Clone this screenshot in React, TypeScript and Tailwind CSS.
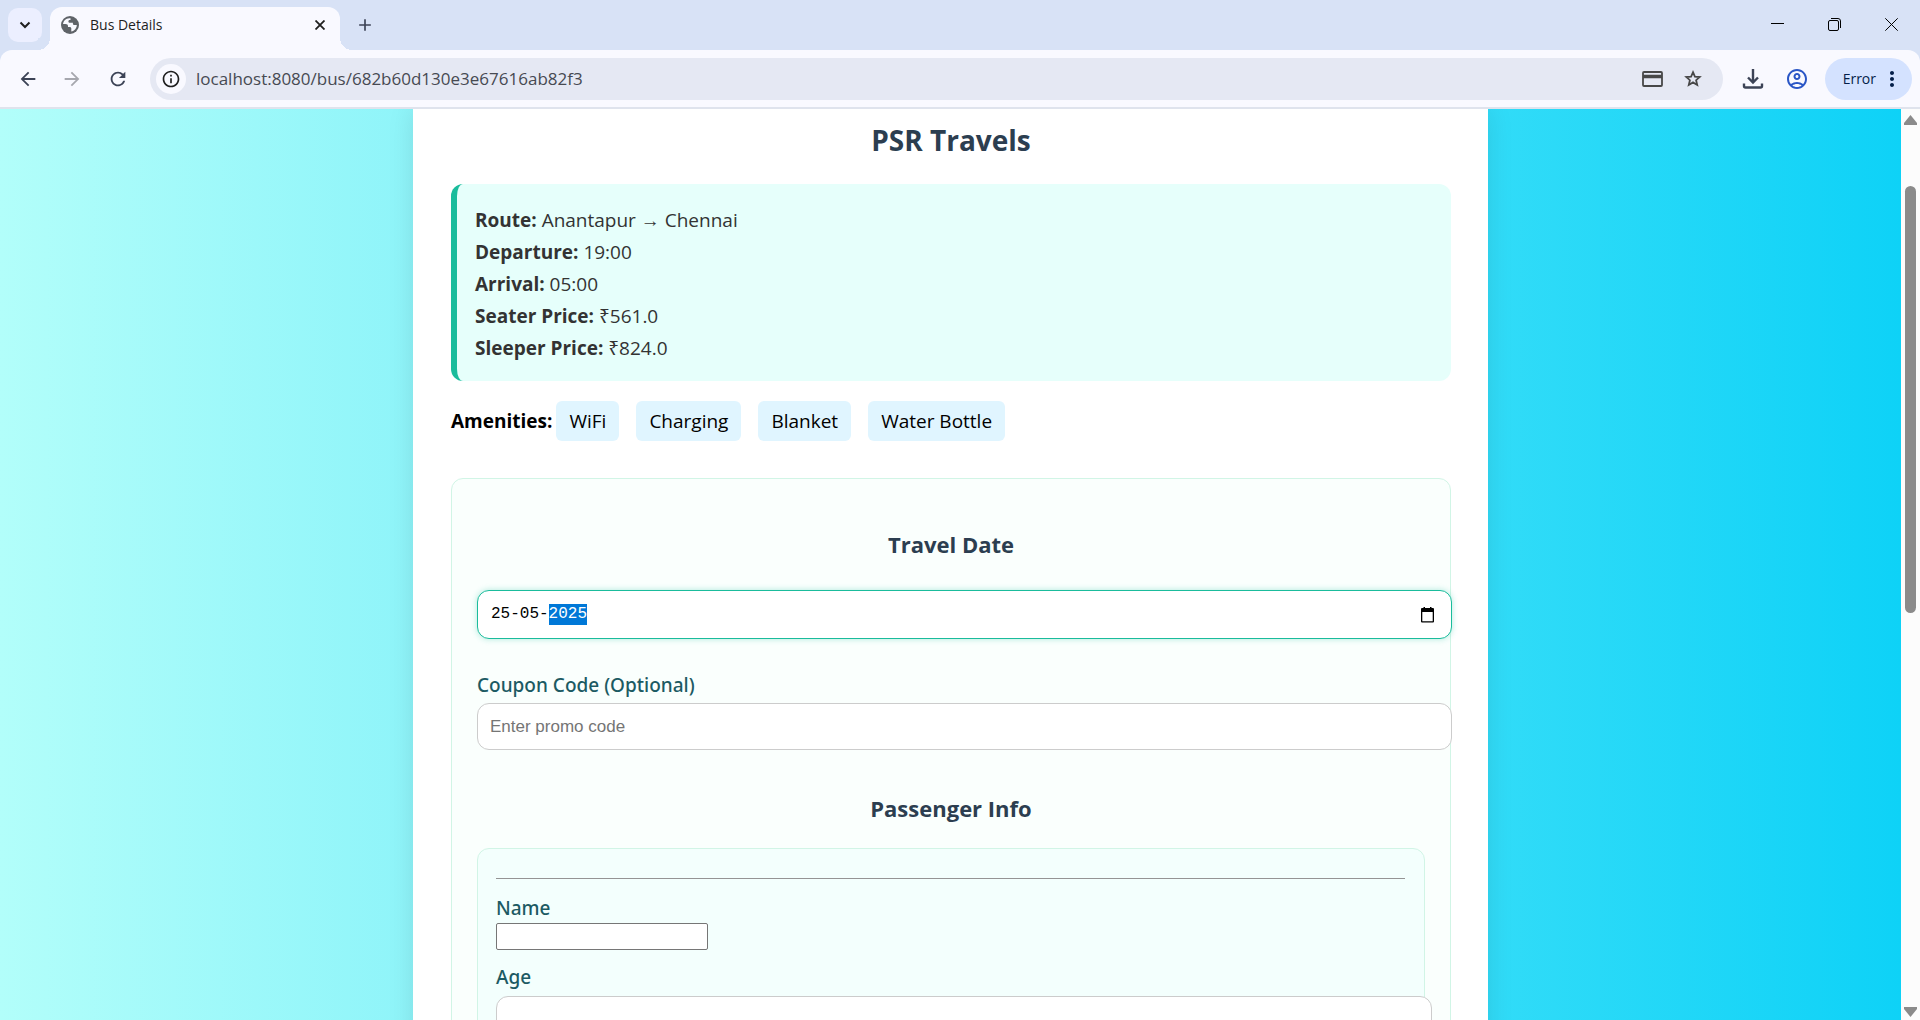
import { useEffect, useRef, type ReactNode } from "react";
import { MdAdd, MdArrowBack, MdArrowForward, MdInfoOutline, MdMoreVert, MdOutlineAccountCircle, MdRefresh } from "react-icons/md";

function GlobeIcon() {
  return (
    <svg viewBox="0 0 18 18" className="size-[18px] shrink-0" aria-hidden="true">
      <circle cx="9" cy="9" r="9" fill="#5f6368" />
      <path d="M8.200 2.200C5 2.400 2.400 4.800 2 8h2.600c1.500 0 2.400.9 2.400 2.100v.9h1.600c1 0 1.700.7 1.700 1.600v3c3.200-.6 5.500-3.300 5.500-6.500h-2.200c-1 0-1.700-.5-1.700-1.400V6.800H8.900c-1 0-1.500-.6-1.500-1.400 0-.8.500-1.400 1.300-1.400h.8V2.200z" fill="#f9f9ff" />
    </svg>
  );
}

function DownloadIcon() {
  return (
    <svg viewBox="0 0 22 22" className="size-[22px]" fill="none" stroke="#3c4356" strokeWidth="2.400" aria-hidden="true">
      <path d="M11 1v13M6 9.500l5 5 5-5M2 15.500V18a1.500 1.500 0 0 0 1.500 1.500h15A1.500 1.500 0 0 0 20 18v-2.500" />
    </svg>
  );
}

function CardIcon() {
  return (
    <svg viewBox="0 0 21 16" className="h-4 w-[21px]" fill="none" stroke="currentColor" aria-hidden="true">
      <rect x="1" y="1" width="19" height="14" rx="1" strokeWidth="1.800" />
      <path d="M1 5.500h19" strokeWidth="3.500" />
    </svg>
  );
}

function StarIcon() {
  return (
    <svg viewBox="0 0 20 20" className="size-5" fill="none" stroke="currentColor" strokeWidth="1.800" aria-hidden="true">
      <path d="m10 3.200 1.900 4.400 4.800.4-3.600 3.200 1.100 4.700-4.200-2.500-4.200 2.500 1.100-4.700L3.300 8l4.800-.4z" />
    </svg>
  );
}

function IconButton({ label, className, children }: { label: string; className: string; children: ReactNode }) {
  return (
    <button type="button" aria-label={label} className={`flex shrink-0 items-center justify-center ${className}`}>
      {children}
    </button>
  );
}

function TabStrip() {
  return (
    <div className="flex h-[50px] items-end bg-[#d8e2f6] pl-2">
      <IconButton label="Search tabs" className="mb-2 size-[34px] rounded-[10px] bg-[#ecefff] text-[#1f1f1f]">
        <svg viewBox="0 0 12 8" className="h-[8px] w-[12px]" fill="none" stroke="currentColor" strokeWidth="2">
          <path d="M1.500 1.500 6 6l4.500-4.500" />
        </svg>
      </IconButton>
      <div className="relative ml-2 flex h-[43px] w-[290px] items-center rounded-t-xl bg-[#f9f9ff] pr-3 pb-2 pl-[11px]">
        <span className="absolute bottom-0 -left-3 size-3 bg-[radial-gradient(circle_at_0_0,#d8e2f6_12px,#f9f9ff_12px)]" />
        <span className="absolute -right-3 bottom-0 size-3 bg-[radial-gradient(circle_at_100%_0,#d8e2f6_12px,#f9f9ff_12px)]" />
        <GlobeIcon />
        <span className="ml-[11px] flex-1 text-sm text-[#1f1f1f]">Bus Details</span>
        <IconButton label="Close tab" className="size-4 text-[#1f1f1f]">
          <svg viewBox="0 0 10 10" className="size-[10px]" stroke="currentColor" strokeWidth="1.800">
            <path d="m.5.5 9 9m0-9-9 9" />
          </svg>
        </IconButton>
      </div>
      <IconButton label="New tab" className="mb-[15px] ml-[15px] size-5 text-[22px] text-[#3c4356]">
        <MdAdd />
      </IconButton>
      <div className="ml-auto flex pb-[10px] text-black">
        <IconButton label="Minimize" className="h-8 w-[57px]">
          <svg viewBox="0 0 13 13" className="size-[13px]" stroke="currentColor"><path d="M0 5.500h13" /></svg>
        </IconButton>
        <IconButton label="Restore" className="h-8 w-[57px]">
          <svg viewBox="0 0 13 13" className="size-[13px]" fill="none" stroke="currentColor">
            <rect x=".5" y="2.500" width="10" height="10" rx="1.500" />
            <path d="M3 .5h7a2.500 2.500 0 0 1 2.500 2.500v7" />
          </svg>
        </IconButton>
        <IconButton label="Close window" className="h-8 w-[57px]">
          <svg viewBox="0 0 13 13" className="size-[13px]" stroke="currentColor"><path d="m.3.3 12.400 12.400m0-12.400L.3 12.700" /></svg>
        </IconButton>
      </div>
    </div>
  );
}

function Toolbar() {
  return (
    <div className="bg-[#d8e2f6]">
      <div className="flex h-[59px] items-center rounded-t-xl border-b-2 border-[#dfe3ed] bg-[#f9f9ff] pr-2 pl-4 text-[#3c4356]">
        <IconButton label="Back" className="size-6 text-[22px]"><MdArrowBack /></IconButton>
        <IconButton label="Forward" className="ml-5 size-6 text-[22px] text-[#a6a7ae]"><MdArrowForward /></IconButton>
        <IconButton label="Reload" className="ml-[22px] size-6 text-[22px]"><MdRefresh /></IconButton>
        <div className="ml-5 flex h-[42px] flex-1 items-center rounded-full bg-[#e5e8f3] pr-[18px] pl-[6px]">
          <IconButton label="View site information" className="size-[30px] rounded-full bg-[#f9f9ff] text-xl text-[#1f1f1f]"><MdInfoOutline /></IconButton>
          <input aria-label="Address" defaultValue="localhost:8080/bus/682b60d130e3e67616ab82f3" className="ml-[10px] min-w-0 flex-1 bg-transparent text-[17px] text-[#474a52] outline-none" />
          <IconButton label="Payment methods" className="size-6 text-[#474747]"><CardIcon /></IconButton>
          <IconButton label="Bookmark this tab" className="ml-4 size-6 text-[#474747]"><StarIcon /></IconButton>
        </div>
        <IconButton label="Downloads" className="ml-[18px] size-6"><DownloadIcon /></IconButton>
        <IconButton label="Profile" className="ml-5 size-6 text-[24px] text-[#2a56c6]"><MdOutlineAccountCircle /></IconButton>
        <button type="button" className="ml-4 flex h-[42px] items-center rounded-full bg-[#d4e2ff] pr-2 pl-[18px] text-sm text-[#041e49]">
          Error
          <MdMoreVert className="ml-1 text-[24px]" />
        </button>
      </div>
    </div>
  );
}

function PageScrollbar() {
  return (
    <div className="flex w-[19px] shrink-0 flex-col items-center bg-[#fcfcfc] pt-[6px] pb-[3px]" aria-hidden="true">
      <svg viewBox="0 0 13 10" className="h-[10px] w-[13px] shrink-0" fill="#8b8b8b"><path d="M6.500 0 13 8v2H0V8z" /></svg>
      <div className="flex min-h-0 flex-1 flex-col pt-[61px]">
        <div className="h-[52%] w-[11px] rounded-full bg-[#8b8b8b]" />
      </div>
      <svg viewBox="0 0 13 10" className="h-[10px] w-[13px] shrink-0" fill="#8b8b8b"><path d="M6.500 10 13 2V0H0v2z" /></svg>
    </div>
  );
}

const trip = [
  ["Route:", "Anantapur → Chennai"],
  ["Departure:", "19:00"],
  ["Arrival:", "05:00"],
  ["Seater Price:", "₹561.0"],
  ["Sleeper Price:", "₹824.0"],
];

const amenities = ["WiFi", "Charging", "Blanket", "Water Bottle"];

function BookingForm() {
  const dateRef = useRef<HTMLInputElement>(null);

  useEffect(() => {
    dateRef.current?.focus({ preventScroll: true });
    dateRef.current?.setSelectionRange(6, 10);
  }, []);

  return (
    <form className="mt-[37px] rounded-xl border border-[#d1f5e6] bg-[#fafffd] px-[25px] pt-[49px]">
      <h3 className="text-center text-[22px] leading-8 font-bold text-[#2c3e50]">Travel Date</h3>
      <div className="mt-[30px] flex h-[49px] w-[calc(100%+27px)] items-center rounded-xl border border-[#1abc9c] bg-white pr-4 pl-[13px] shadow-[0_0_6px_#1abc9c55]">
        <input
          ref={dateRef}
          aria-label="Travel Date"
          defaultValue="25-05-2025"
          className="h-[21px] min-w-0 flex-1 bg-transparent font-['Liberation_Mono',monospace] text-base leading-[21px] text-black caret-transparent outline-none selection:bg-[#0078d7] selection:text-white"
        />
        <IconButton label="Open calendar" className="size-4 text-black">
          <svg viewBox="0 0 15 16" className="h-4 w-[15px]" fill="currentColor">
            <path fillRule="evenodd" d="M2 1h1.500V0H5v1h5V0h1.500v1H13a1 1 0 0 1 1 1v12.500a1 1 0 0 1-1 1H2a1 1 0 0 1-1-1V2a1 1 0 0 1 1-1m.3 4v9.200h10.400V5z" />
          </svg>
        </IconButton>
      </div>
      <label htmlFor="coupon" className="mt-[31px] block font-['Noto_Sans',sans-serif] text-[19px] leading-[30px] font-medium text-[#1c5a63]">Coupon Code (Optional)</label>
      <input
        id="coupon"
        placeholder="Enter promo code"
        className="mt-[3px] block h-[47px] w-[calc(100%+27px)] rounded-xl border border-[#ccc] bg-white px-3 font-['Liberation_Sans',sans-serif] text-[17px] text-black outline-none placeholder:text-[#757575]"
      />
      <h3 className="mt-[42px] text-center text-[22px] leading-8 font-bold text-[#2c3e50]">Passenger Info</h3>
      <div className="mt-6 rounded-xl border border-[#d1f5e6] bg-[#f3fffd] pt-[29px] pr-[19px] pb-8 pl-[18px]">
        <hr className="border-[#949494]" />
        <label htmlFor="name" className="mt-[14px] block font-['Noto_Sans',sans-serif] text-[19px] leading-[30px] font-medium text-[#1c5a63]">Name</label>
        <input id="name" className="block h-[27px] w-[212px] rounded-xs border border-[#767676] bg-white px-1 text-base outline-none" />
        <label htmlFor="age" className="mt-3 block font-['Noto_Sans',sans-serif] text-[19px] leading-[30px] font-medium text-[#1c5a63]">Age</label>
        <input id="age" className="mt-1 block h-[47px] w-[calc(100%+27px)] rounded-xl border border-[#ccc] bg-white px-3 text-base outline-none" />
      </div>
    </form>
  );
}

export default function App() {
  return (
    <div className="flex h-screen flex-col overflow-hidden font-['Open_Sans','Noto_Sans',sans-serif]">
      <TabStrip />
      <Toolbar />
      <div className="flex min-h-0 flex-1">
        <div className="min-w-0 flex-1 overflow-hidden bg-linear-to-r/srgb from-[#b2fefa] to-[#0ed2f7]">
          <main className="mx-auto max-w-[1075px] bg-white pt-[7px] pr-[37px] pl-[38px] shadow-[0_0_25px_rgba(0,0,0,0.1)]">
            <h2 className="text-center text-[28px] leading-12 font-bold text-[#2c3e50]">PSR Travels</h2>
            <section className="mt-5 rounded-xl border-l-6 border-[#1abc9c] bg-[#e6fffb] px-[18px] pt-5 pb-[17px] text-[19px] leading-8 text-[#333]">
              {trip.map(([label, value]) => (
                <p key={label}><strong>{label}</strong> {value}</p>
              ))}
            </section>
            <div className="mt-5 flex items-center text-[19px] leading-10 text-black">
              <strong className="mr-1">Amenities:</strong>
              <ul className="flex gap-[17px]">
                {amenities.map((item) => (
                  <li key={item} className="rounded-md bg-[#e0f5ff] px-[13px]">{item}</li>
                ))}
              </ul>
            </div>
            <BookingForm />
          </main>
        </div>
        <PageScrollbar />
      </div>
    </div>
  );
}
